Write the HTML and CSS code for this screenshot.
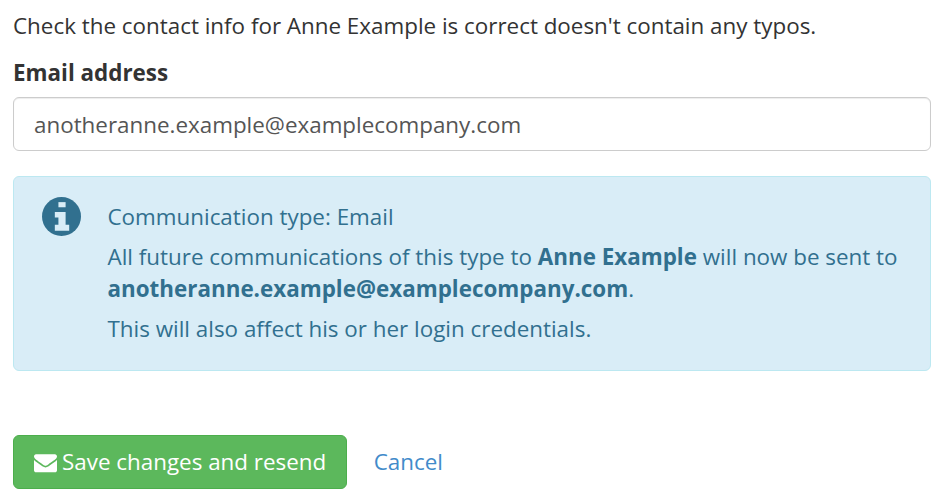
FILE: index.html
```html
<!DOCTYPE html>
<html lang="en">
<head>
<meta charset="utf-8">
<title>Check contact info</title>
<link rel="stylesheet" href="styles.css">
</head>
<body>
<p class="intro">Check the contact info for Anne Example is correct doesn't contain any typos.</p>
<label class="label" for="email">Email address</label>
<input class="input" id="email" type="text" value="anotheranne.example@examplecompany.com">
<div class="alert">
  <svg class="alert-icon" viewBox="0 0 38 38" aria-hidden="true">
    <circle cx="19" cy="19" r="19" fill="#31708f"/>
    <path d="M16 5h7v5h-7z" fill="#d9edf7"/>
    <path d="M12.500 14.500H23V27h3.500v6h-14v-6H16v-7h-3.500z" fill="#d9edf7"/>
  </svg>
  <div class="alert-body">
    <p class="alert-title">Communication type: Email</p>
    <p class="alert-text">All future communications of this type to <strong>Anne Example</strong> will now be sent to <strong>anotheranne.example@examplecompany.com</strong>.</p>
    <p class="alert-text">This will also affect his or her login credentials.</p>
  </div>
</div>
<div class="actions">
  <button class="btn" type="button">
    <svg class="btn-icon" viewBox="0 0 1792 1792" aria-hidden="true"><path fill="#fff" d="M1792 710v794q0 66-47 113t-113 47H160q-66 0-113-47T0 1504V710q44 49 101 87 362 246 497 345 57 42 92.500 65.500t94.500 48 110 24.500h2q51 0 110-24.500t94.500-48 92.500-65.500q170-123 498-345 57-39 100-87zm0-294q0 79-49 151t-122 123q-376 261-468 325-10 7-42.500 30.500t-54 38-52 32.500-57.500 27-50 9h-2q-23 0-50-9t-57.500-27-52-32.500-54-38T639 1015q-91-64-262-182.500T172 690q-62-42-117-115.500T0 438q0-78 41.500-130T160 256h1472q65 0 112.500 47t47.500 113z"/></svg>
    Save changes and resend
  </button>
  <a class="cancel" href="#">Cancel</a>
</div>
</body>
</html>
```
FILE: styles.css
```css
html, body { margin: 0; padding: 0; }
body {
  width: 939px;
  height: 503px;
  overflow: hidden;
  box-sizing: border-box;
  padding: 11px 8px 0 13px;
  background: #fff;
  color: #333;
  font-family: "Open Sans", sans-serif;
  font-size: 22.4px;
  line-height: 30px;
}
.intro { margin: 0 0 17px; }
.label { display: block; font-weight: 700; margin-bottom: 9px; }
.input {
  display: block;
  box-sizing: border-box;
  width: 918px;
  height: 54px;
  padding: 0 20px;
  border: 1px solid #ccc;
  border-radius: 6px;
  color: #555;
  font: inherit;
  background: #fff;
  box-shadow: inset 0 1px 1px rgba(0,0,0,.075);
}
.alert {
  box-sizing: border-box;
  width: 918px;
  height: 195px;
  margin-top: 25px;
  padding: 20px 28px;
  display: flex;
  gap: 26.500px;
  background: #d9edf7;
  border: 1px solid #bce8f1;
  border-radius: 6px;
  color: #31708f;
}
.alert-icon { width: 39px; height: 39px; flex: none; }
.alert-body { flex: 1; min-width: 0; padding-top: 4px; }
.alert-title { margin: 0 0 8px; line-height: 32px; }
.alert-text { margin: 0 0 8px; line-height: 32px; }
.actions { display: flex; align-items: center; gap: 26.500px; margin-top: 64px; }
.btn {
  display: flex;
  align-items: center;
  gap: 5px;
  box-sizing: border-box;
  height: 54px;
  padding: 0 20px;
  border: 1px solid #4cae4c;
  border-radius: 6px;
  background: #5cb85c;
  color: #fff;
  font: inherit;
}
.btn-icon { width: 23px; height: 23px; }
.cancel { color: #428bca; text-decoration: none; }
```
